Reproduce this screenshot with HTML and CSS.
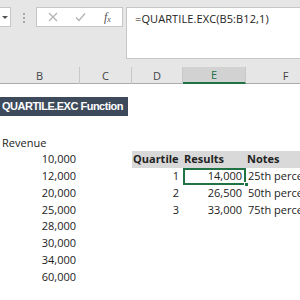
FILE: index.html
```html
<!doctype html>
<html>
<head>
<meta charset="utf-8">
<title>QUARTILE.EXC</title>
<link rel="stylesheet" href="styles.css">
</head>
<body>
<div class="toolbar">
  <div class="namebox"><span class="arrow"></span></div>
  <div class="dots"><i></i><i></i><i></i></div>
  <div class="fbuttons">
    <svg class="ico" width="10" height="10" viewBox="0 0 10 10"><path d="M1 1L9 9M9 1L1 9" stroke="#b3b3b3" stroke-width="1.3" fill="none"/></svg>
    <svg class="ico" width="11" height="10" viewBox="0 0 11 10"><path d="M1 5.5L4 8.5L10 1.5" stroke="#b3b3b3" stroke-width="1.3" fill="none"/></svg>
    <span class="fx">f<sub>x</sub></span>
  </div>
  <div class="formula">=QUARTILE.EXC(B5:B12,1)</div>
</div>
<div class="colheads">
  <div>B</div>
  <div>C</div>
  <div>D</div>
  <div class="sel">E</div>
  <div>F</div>
</div>
<table class="sheet" cellspacing="0" cellpadding="0">
  <colgroup><col class="cb"><col class="cc"><col class="cd"><col class="ce"><col class="cf"></colgroup>
  <tr class="r1"><td></td><td></td><td></td><td></td><td></td></tr>
  <tr class="r2"><td class="ttl"><span>QUARTILE.EXC Function</span></td><td></td><td></td><td></td><td></td></tr>
  <tr class="r3"><td></td><td></td><td></td><td></td><td></td></tr>
  <tr><td class="l">Revenue</td><td></td><td></td><td></td><td></td></tr>
  <tr><td class="r">10,000</td><td></td><td class="hd">Quartile</td><td class="hd">Results</td><td class="hd">Notes</td></tr>
  <tr><td class="r">12,000</td><td></td><td class="r">1</td><td class="r act">14,000<i class="handle"></i></td><td class="l">25th percentile</td></tr>
  <tr><td class="r">20,000</td><td></td><td class="r">2</td><td class="r">26,500</td><td class="l">50th percentile</td></tr>
  <tr><td class="r">25,000</td><td></td><td class="r">3</td><td class="r">33,000</td><td class="l">75th percentile</td></tr>
  <tr><td class="r">28,000</td><td></td><td></td><td></td><td></td></tr>
  <tr><td class="r">30,000</td><td></td><td></td><td></td><td></td></tr>
  <tr><td class="r">34,000</td><td></td><td></td><td></td><td></td></tr>
  <tr><td class="r">60,000</td><td></td><td></td><td></td><td></td></tr>
</table>
</body>
</html>
```
FILE: styles.css
```css
*{ margin:0; padding:0; box-sizing:border-box}
body{ width:300px; height:300px; overflow:hidden; background:#fff; font-family:"Open Sans","DejaVu Sans",sans-serif; color:#222}

.toolbar{ display:flex; align-items:flex-start; height:67px; padding-top:7px; background:#e6e6e6}
.namebox{ width:11px; height:20px; background:#fff; border:1px solid #c6c6c6; border-left:none; display:flex; align-items:center; justify-content:center}
.arrow{ width:0; height:0; border-left:3px solid transparent; border-right:3px solid transparent; border-top:3px solid #555}
.dots{ display:flex; flex-direction:column; gap:2px; margin:6px 0 0 12px; width:2px}
.dots i{ display:block; width:2px; height:2px; background:#a8a8a8}
.fbuttons{ display:flex; align-items:center; width:87px; height:20px; margin-left:11px; background:#fff; border:1px solid #c6c6c6; padding-left:11px}
.fbuttons .ico{ display:block}
.fbuttons .ico+.ico{ margin-left:17px}
.fx{ margin-left:18px; font-family:"Liberation Serif",serif; font-style:italic; font-size:12px; color:#555}
.fx sub{ font-size:8px; vertical-align:-1px}
.formula{ flex:1; height:52px; margin-left:3px; background:#fff; border:1px solid #c6c6c6; border-right:none; padding:3px 0 0 8px; font-size:11px; color:#222; letter-spacing:0.1px}

.colheads{ display:grid; grid-template-columns:80px 52px 51px 63px 80px; height:17px; background:#e6e6e6; border-bottom:1px solid #ababab}
.colheads div{ display:flex; align-items:center; justify-content:center; font-size:11px; color:#444; border-right:1px solid #c8c8c8}
.colheads .sel{ background:#d2d2d2; border-bottom:2px solid #217346; color:#217346}

.sheet{ table-layout:fixed; border-collapse:collapse; width:326px}
.cb{ width:80px}
.cc{ width:52px}
.cd{ width:51px}
.ce{ width:63px}
.cf{ width:80px}
.sheet td{ height:16.75px; font-size:11px; line-height:14px; white-space:nowrap; overflow:visible; padding:0 4px 0 2px; position:relative}
.sheet .r1 td{ height:13px}
.sheet .r2 td{ height:19px}
.sheet .r3 td{ height:18.25px}
.sheet td.r{ text-align:right}
.sheet td.l{ text-align:left; padding-left:2px}
.sheet td.hd{ background:#d9d9d9; font-weight:bold; padding-left:1px}
.ttl span{ display:block; background:#3d4a5b; color:#fff; font-family:"Liberation Sans",Arial,sans-serif; font-weight:bold; font-size:11px; letter-spacing:-0.5px; line-height:19px; width:128px; margin-left:-2px; padding-left:2px}
.sheet td.act{ outline:2px solid #217346; outline-offset:-2px}
.handle{ position:absolute; right:-3px; bottom:-2px; width:5px; height:5px; background:#217346; border:1px solid #fff}
```
